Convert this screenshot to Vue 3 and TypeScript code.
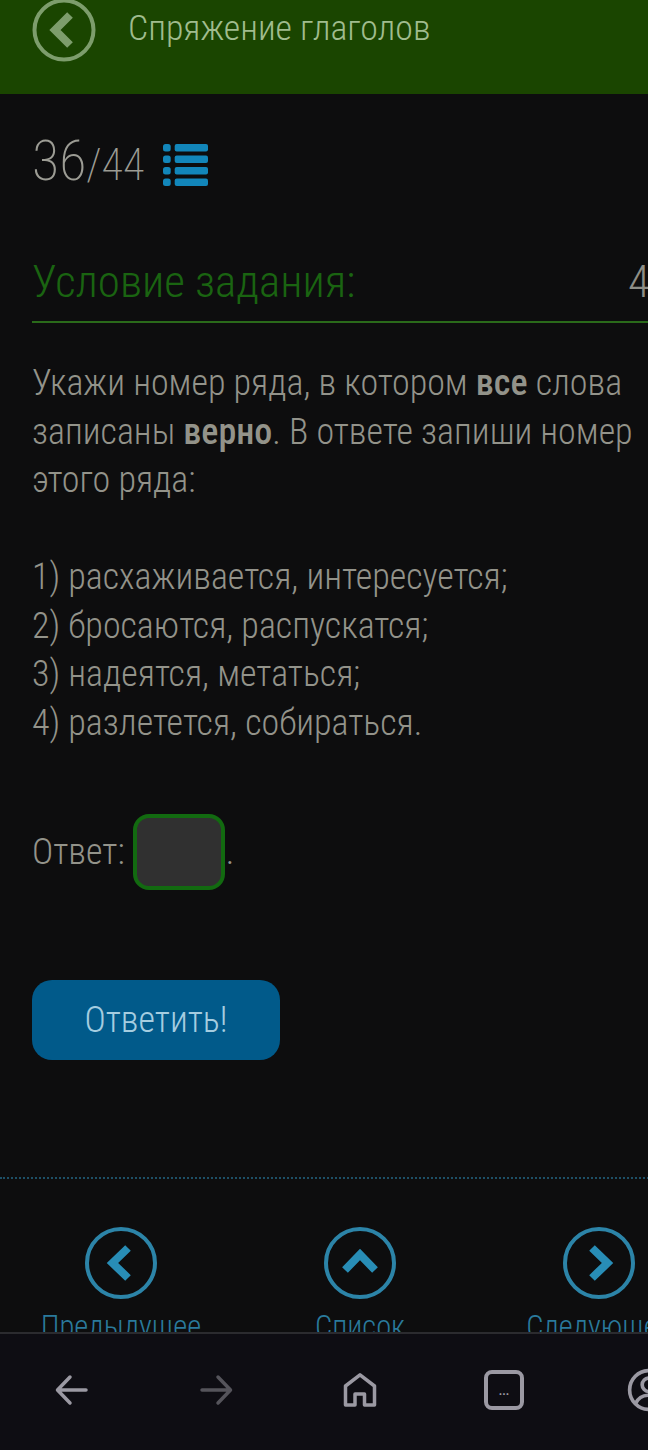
<script setup lang="ts">
const options: string[] = [
  '1) расхаживается, интересуется;',
  '2) бросаются, распускатся;',
  '3) надеятся, метаться;',
  '4) разлетется, собираться.',
]
const navItems = [
  { label: 'Предыдущее', vb: 'left' },
  { label: 'Список', vb: 'up' },
  { label: 'Следующее', vb: 'right' },
]
</script>

<template>
  <div class="viewport">
    <div class="page">
      <header class="topbar">
        <svg class="back" viewBox="0 0 64 64" aria-hidden="true">
          <circle cx="32" cy="32" r="29.5" fill="none" stroke="#7d9d6c" stroke-width="4" />
          <path d="M38 17 23 32l15 15" fill="none" stroke="#7d9d6c" stroke-width="8" />
        </svg>
        <span class="title">Спряжение глаголов</span>
      </header>

      <div class="counter">
        <span class="num"><span class="cur">36</span><span class="tot">/44</span></span>
        <svg class="list" viewBox="0 0 45 42" aria-hidden="true">
          <g fill="#1286ba">
            <rect x="0" y="0" width="7.700" height="7.500" rx="2.500" />
            <rect x="0" y="11.500" width="7.700" height="7.500" rx="2.500" />
            <rect x="0" y="23" width="7.700" height="7.500" rx="2.500" />
            <rect x="0" y="34.500" width="7.700" height="7.500" rx="2.500" />
            <rect x="11.700" y="0" width="33.300" height="7.500" rx="2" />
            <rect x="11.700" y="11.500" width="33.300" height="7.500" rx="2" />
            <rect x="11.700" y="23" width="33.300" height="7.500" rx="2" />
            <rect x="11.700" y="34.500" width="33.300" height="7.500" rx="2" />
          </g>
        </svg>
      </div>

      <div class="heading">
        <span class="h-left">Условие задания:</span>
        <span class="h-right">4</span>
      </div>

      <div class="task">
        <p>Укажи номер ряда, в котором <b>все</b> слова записаны <b>верно</b>. В ответе запиши номер этого ряда:</p>
        <p class="opts"><span v-for="o in options" :key="o" class="opt">{{ o }}</span></p>
      </div>

      <div class="answer">
        <span>Ответ:</span>
        <span class="box"></span>
        <span>.</span>
      </div>

      <button class="submit">Ответить!</button>

      <div class="dots"></div>

      <nav class="pager">
        <div v-for="n in navItems" :key="n.label" class="pager-item">
          <svg class="circle" viewBox="0 0 72 72" aria-hidden="true">
            <circle cx="36" cy="36" r="34" fill="none" stroke="#2c84a8" stroke-width="4" />
            <path v-if="n.vb === 'left'" d="M43 21 27.500 36 43 51" fill="none" stroke="#288db6" stroke-width="8" />
            <path v-else-if="n.vb === 'up'" d="M21 43 36 27.500 51 43" fill="none" stroke="#288db6" stroke-width="8" />
            <path v-else d="M29 21 44.500 36 29 51" fill="none" stroke="#288db6" stroke-width="8" />
          </svg>
          <span class="pager-label">{{ n.label }}</span>
        </div>
      </nav>
    </div>

    <div class="browser">
      <svg class="b-ico b-back" viewBox="0 0 36 36" aria-hidden="true">
        <path d="M32 18H4M16 5 3.500 18 16 31" fill="none" stroke="#9b99a3" stroke-width="3.500" stroke-linecap="round" stroke-linejoin="round" />
      </svg>
      <svg class="b-ico b-fwd" viewBox="0 0 36 36" aria-hidden="true">
        <path d="M4 18h28M20 5l12.500 13L20 31" fill="none" stroke="#55545b" stroke-width="3.500" stroke-linecap="round" stroke-linejoin="round" />
      </svg>
      <svg class="b-ico b-home" viewBox="0 0 36 36" aria-hidden="true">
        <path d="M3.500 14 18 2.800 32.500 14V33H22.500V22H13V33H3.500Z" fill="none" stroke="#9b99a3" stroke-width="3.500" stroke-linejoin="round" />
      </svg>
      <div class="tabs"><span>...</span></div>
      <svg class="b-ico avatar" viewBox="0 0 42 42" aria-hidden="true">
        <circle cx="21" cy="21" r="18.500" fill="none" stroke="#9b99a3" stroke-width="3.500" />
        <circle cx="21" cy="16" r="6.500" fill="none" stroke="#9b99a3" stroke-width="3.500" />
        <path d="M8 34c3-6 8-8 13-8s10 2 13 8" fill="none" stroke="#9b99a3" stroke-width="3.500" />
      </svg>
    </div>
  </div>
</template>

<style>
html, body { margin: 0; background: #0d0d0e; }
</style>

<style scoped>
.viewport {
  position: relative;
  width: 648px;
  height: 1450px;
  overflow: hidden;
  background: #0d0d0e;
  font-family: Roboto, "Noto Sans", sans-serif;
  font-weight: 300;
  font-stretch: 85%;
}
.page { width: 720px; }
.topbar {
  height: 94px;
  background: #1a4500;
  display: flex;
  align-items: flex-start;
  padding-left: 32px;
  box-sizing: border-box;
}
.back { width: 64px; height: 64px; margin-top: -2px; flex: none; }
.title {
  margin-left: 32px;
  font-size: 35.800px;
  line-height: 56px;
  color: #a0bc8e;
  white-space: nowrap;
}
.counter {
  margin: 38px 0 0 32px;
  height: 66px;
  display: flex;
  align-items: center;
  color: #9c9c94;
}
.num { line-height: 66px; padding-top: 6px; }
.cur { font-size: 56px; font-weight: 200; }
.tot { font-size: 44px; font-weight: 200; }
.list { width: 45px; height: 42px; margin-left: 19px; }
.heading {
  margin: 24px 0 0 32px;
  height: 101px;
  box-sizing: border-box;
  border-bottom: 2px solid #2a6a1a;
  padding-top: 20px;
  display: flex;
  justify-content: space-between;
  align-items: center;
  font-size: 45px;
}
.h-left { color: #1a6411; }
.h-right { color: #8e8e86; margin-right: 70px; }
.task {
  margin: 36px 32px 0;
  font-size: 36px;
  line-height: 48.500px;
  color: #93938a;
}
.task p { margin: 0; }
.task b { font-weight: 500; }
.opts { margin-top: 48.500px !important; }
.opt { display: block; }
.answer {
  margin: 67px 0 0 32px;
  display: flex;
  align-items: center;
  font-size: 36px;
  color: #93938a;
}
.box {
  width: 92px;
  height: 76px;
  box-sizing: border-box;
  margin: 0 1px 0 8px;
  background: #303030;
  border: 4px solid #126a10;
  border-radius: 16px;
}
.submit {
  display: block;
  margin: 90px 0 0 32px;
  width: 248px;
  height: 80px;
  border: none;
  border-radius: 20px;
  background: #015a8a;
  color: #a5cde0;
  font: inherit;
  font-size: 36px;
}
.dots {
  margin-top: 117px;
  border-top: 2px dotted #1d4f66;
}
.pager {
  margin-top: 48px;
  padding: 0 1.500px;
  display: grid;
  grid-template-columns: repeat(3, 239px);
}
.pager-item {
  display: flex;
  flex-direction: column;
  align-items: center;
}
.circle { width: 72px; height: 72px; }
.pager-label {
  font-size: 30.500px;
  color: #2a7a9c;
  margin-top: 8px;
  line-height: 40px;
}
.browser {
  position: absolute;
  left: 0;
  right: 0;
  top: 1332px;
  bottom: 0;
  background: #0e0d13;
  border-top: 2px solid #2b2b2f;
}
.b-ico { position: absolute; top: 38px; width: 36px; height: 36px; }
.b-back { left: 54px; }
.b-fwd { left: 198px; }
.b-home { left: 342px; }
.tabs {
  position: absolute;
  left: 484px;
  top: 36px;
  width: 40px;
  height: 40px;
  box-sizing: border-box;
  border: 4px solid #9b99a3;
  border-radius: 8px;
  color: #9b99a3;
  font: 700 12px/34px Roboto, sans-serif;
  text-align: center;
}
.avatar { left: 627px; top: 34px; width: 44px; height: 44px; }
</style>
